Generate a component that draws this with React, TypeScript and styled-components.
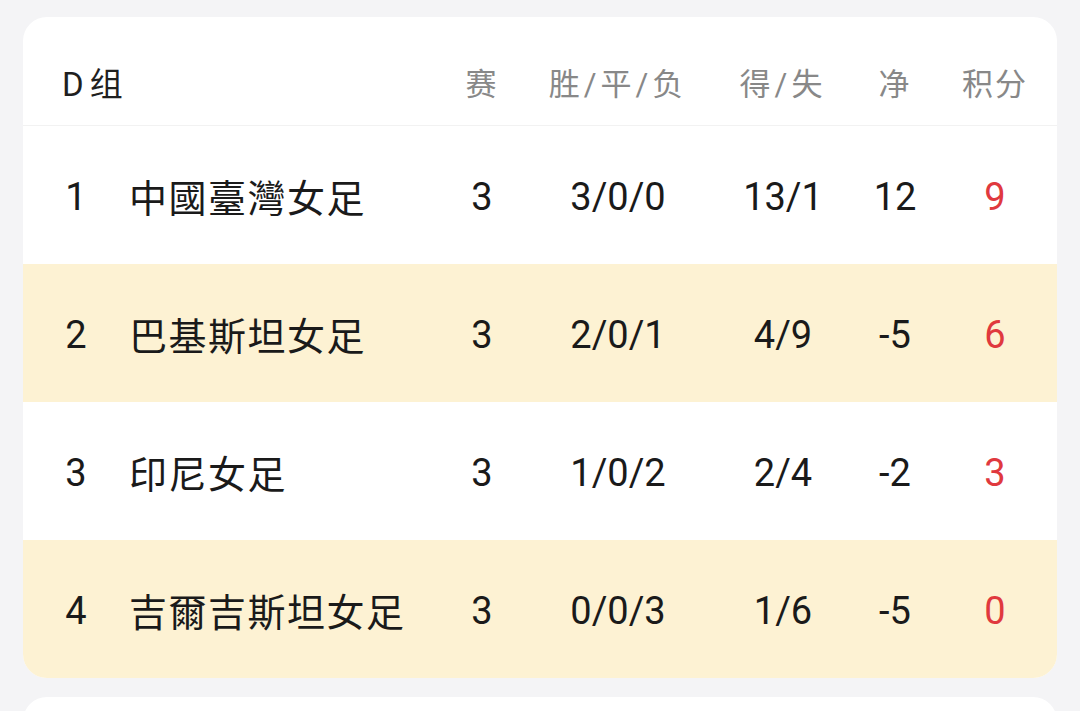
import React from "react";
import styled, { createGlobalStyle } from "styled-components";

const GlobalStyle = createGlobalStyle`
  html, body {
    margin: 0;
    padding: 0;
    background: #f4f4f6;
  }
  body {
    font-family: Roboto, "Noto Sans CJK SC", "Noto Sans", sans-serif;
    color: #1a1a1a;
  }
`;

const Page = styled.div`
  width: 1080px;
  height: 711px;
  overflow: hidden;
  box-sizing: border-box;
  padding: 17px 23px 0;
  display: flex;
  flex-direction: column;
  gap: 19px;
`;

const Card = styled.div`
  background: #ffffff;
  border-radius: 24px;
  overflow: hidden;
  flex-shrink: 0;
`;

const NextCard = styled(Card)`
  height: 60px;
`;

const cols = "106px 308px 90px 182px 148px 76px 124px";

const HeaderRow = styled.div`
  display: grid;
  grid-template-columns: ${cols};
  height: 109px;
  box-sizing: border-box;
  padding-top: 48px;
  border-bottom: 1px solid #f2f2f2;
  font-size: 31px;
  color: #888888;
`;

const GroupTitle = styled.div`
  grid-column: 1 / span 2;
  padding-left: 39px;
  color: #1f1f1f;
  font-size: 33px;
  line-height: 40px;
  letter-spacing: 6px;
`;

const HeadCell = styled.div<{ $spaced?: boolean }>`
  text-align: center;
  line-height: 40px;
  letter-spacing: ${(p) => (p.$spaced ? "4px" : "2px")};
  white-space: nowrap;
`;

const Row = styled.div<{ $alt: boolean }>`
  display: grid;
  grid-template-columns: ${cols};
  align-items: center;
  height: 138px;
  background: ${(p) => (p.$alt ? "#fdf2d3" : "#ffffff")};
  font-size: 38px;
`;

const Rank = styled.div`
  text-align: center;
  padding-top: 3px;
`;

const Team = styled.div`
  letter-spacing: 1.5px;
  white-space: nowrap;
`;

const Num = styled.div<{ $red?: boolean }>`
  text-align: center;
  white-space: nowrap;
  padding-top: 3px;
  color: ${(p) => (p.$red ? "#e0393e" : "#1a1a1a")};
`;

const rows = [
  { rank: 1, team: "中國臺灣女足", played: 3, wdl: "3/0/0", goals: "13/1", diff: "12", pts: 9 },
  { rank: 2, team: "巴基斯坦女足", played: 3, wdl: "2/0/1", goals: "4/9", diff: "-5", pts: 6 },
  { rank: 3, team: "印尼女足", played: 3, wdl: "1/0/2", goals: "2/4", diff: "-2", pts: 3 },
  { rank: 4, team: "吉爾吉斯坦女足", played: 3, wdl: "0/0/3", goals: "1/6", diff: "-5", pts: 0 },
];

export default function App() {
  return (
    <>
      <GlobalStyle />
      <Page>
        <Card>
          <HeaderRow>
            <GroupTitle>D组</GroupTitle>
            <HeadCell>赛</HeadCell>
            <HeadCell $spaced>胜/平/负</HeadCell>
            <HeadCell $spaced>得/失</HeadCell>
            <HeadCell>净</HeadCell>
            <HeadCell>积分</HeadCell>
          </HeaderRow>
          {rows.map((r) => (
            <Row key={r.rank} $alt={r.rank % 2 === 0}>
              <Rank>{r.rank}</Rank>
              <Team>{r.team}</Team>
              <Num>{r.played}</Num>
              <Num>{r.wdl}</Num>
              <Num>{r.goals}</Num>
              <Num>{r.diff}</Num>
              <Num $red>{r.pts}</Num>
            </Row>
          ))}
        </Card>
        <NextCard />
      </Page>
    </>
  );
}
